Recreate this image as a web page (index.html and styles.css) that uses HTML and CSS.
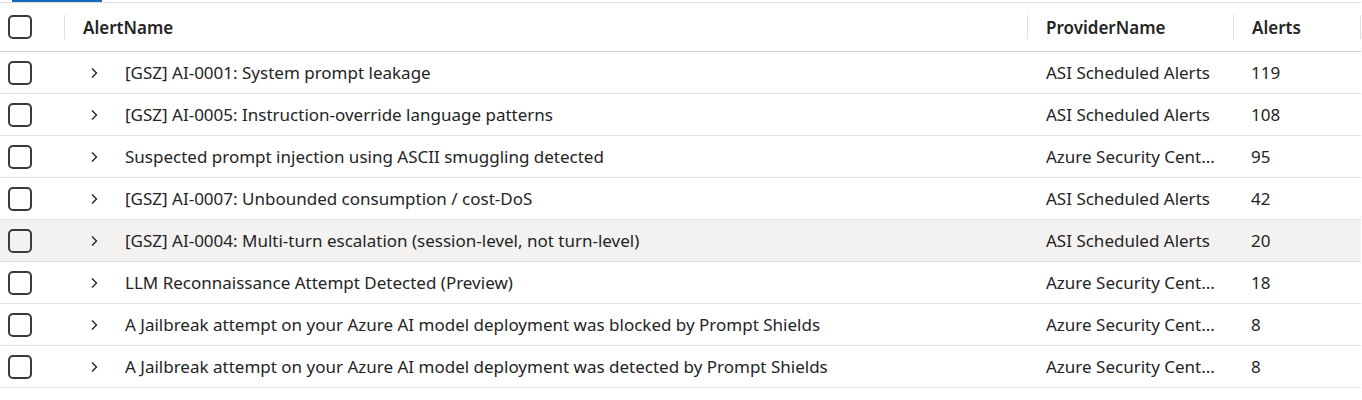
FILE: index.html
```html
<!DOCTYPE html>
<html lang="en">
<head>
  <meta charset="UTF-8">
  <title>Alerts</title>
  <link rel="stylesheet" href="styles.css">
</head>
<body>

  <div class="tabbar"><div class="tab-line"></div></div>

  <div class="grid">
    <div class="row head">
      <div class="cell check"><span class="box"></span></div>
      <div class="cell th"><span class="sep"></span>AlertName</div>
      <div class="cell th"><span class="sep"></span>ProviderName</div>
      <div class="cell th"><span class="sep"></span>Alerts<span class="sep end"></span></div>
    </div>

    <div class="row">
      <div class="cell check"><span class="box"></span></div>
      <div class="cell name"><svg class="chev" viewBox="0 0 10 12"><path d="M3 1.5 L7.5 6 L3 10.5"/></svg>[GSZ] AI-0001: System prompt leakage</div>
      <div class="cell prov">ASI Scheduled Alerts</div>
      <div class="cell num">119</div>
    </div>
    <div class="row">
      <div class="cell check"><span class="box"></span></div>
      <div class="cell name"><svg class="chev" viewBox="0 0 10 12"><path d="M3 1.5 L7.5 6 L3 10.5"/></svg>[GSZ] AI-0005: Instruction-override language patterns</div>
      <div class="cell prov">ASI Scheduled Alerts</div>
      <div class="cell num">108</div>
    </div>
    <div class="row">
      <div class="cell check"><span class="box"></span></div>
      <div class="cell name"><svg class="chev" viewBox="0 0 10 12"><path d="M3 1.5 L7.5 6 L3 10.5"/></svg>Suspected prompt injection using ASCII smuggling detected</div>
      <div class="cell prov">Azure Security Cent...</div>
      <div class="cell num">95</div>
    </div>
    <div class="row">
      <div class="cell check"><span class="box"></span></div>
      <div class="cell name"><svg class="chev" viewBox="0 0 10 12"><path d="M3 1.5 L7.5 6 L3 10.5"/></svg>[GSZ] AI-0007: Unbounded consumption / cost-DoS</div>
      <div class="cell prov">ASI Scheduled Alerts</div>
      <div class="cell num">42</div>
    </div>
    <div class="row hover">
      <div class="cell check"><span class="box"></span></div>
      <div class="cell name"><svg class="chev" viewBox="0 0 10 12"><path d="M3 1.5 L7.5 6 L3 10.5"/></svg>[GSZ] AI-0004: Multi-turn escalation (session-level, not turn-level)</div>
      <div class="cell prov">ASI Scheduled Alerts</div>
      <div class="cell num">20</div>
    </div>
    <div class="row">
      <div class="cell check"><span class="box"></span></div>
      <div class="cell name"><svg class="chev" viewBox="0 0 10 12"><path d="M3 1.5 L7.5 6 L3 10.5"/></svg>LLM Reconnaissance Attempt Detected (Preview)</div>
      <div class="cell prov">Azure Security Cent...</div>
      <div class="cell num">18</div>
    </div>
    <div class="row">
      <div class="cell check"><span class="box"></span></div>
      <div class="cell name"><svg class="chev" viewBox="0 0 10 12"><path d="M3 1.5 L7.5 6 L3 10.5"/></svg>A Jailbreak attempt on your Azure AI model deployment was blocked by Prompt Shields</div>
      <div class="cell prov">Azure Security Cent...</div>
      <div class="cell num">8</div>
    </div>
    <div class="row">
      <div class="cell check"><span class="box"></span></div>
      <div class="cell name"><svg class="chev" viewBox="0 0 10 12"><path d="M3 1.5 L7.5 6 L3 10.5"/></svg>A Jailbreak attempt on your Azure AI model deployment was detected by Prompt Shields</div>
      <div class="cell prov">Azure Security Cent...</div>
      <div class="cell num">8</div>
    </div>
  </div>

</body>
</html>
```

FILE: styles.css
```css
* { box-sizing: border-box; }

body {
  margin: 0;
  font-family: 'Noto Sans', 'Open Sans', sans-serif;
  font-size: 17px;
  color: #242424;
  background: #fff;
}

.tabbar {
  width: 1361px;
  height: 3px;
  border-bottom: 1px solid #e1dfdd;
  padding-left: 12px;
}

.tab-line {
  width: 90px;
  height: 2px;
  background: #0f6cbd;
}

.grid {
  width: 1361px;
}

.row {
  display: grid;
  grid-template-columns: 64px 963px 206px 128px;
  height: 42px;
  border-bottom: 1px solid #e1dfdd;
}

.row.head {
  height: 49px;
  border-bottom: 1px solid #c8ccd0;
  font-weight: 600;
}

.row.hover {
  background: #f3f2f1;
}

.cell {
  display: flex;
  align-items: center;
  white-space: nowrap;
  overflow: hidden;
}

.check {
  padding-left: 8px;
}

.box {
  display: block;
  width: 24px;
  height: 24px;
  border: 2px solid #3b3a39;
  border-radius: 5px;
}

.th .sep {
  display: block;
  width: 1px;
  height: 24px;
  background: #e1dfdd;
  margin-right: 18px;
}

.th .sep.end {
  margin: 0 0 0 auto;
}

.name {
  padding-left: 25px;
}

.chev {
  width: 10px;
  height: 12px;
  margin-right: 26px;
  fill: none;
  stroke: #242424;
  stroke-width: 1.4;
}

.prov {
  padding-left: 19px;
}

.num {
  padding-left: 18px;
}
```
